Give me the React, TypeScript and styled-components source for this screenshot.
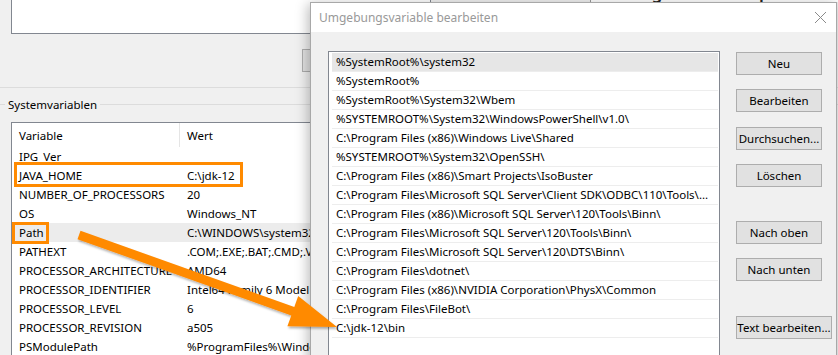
import React from 'react';
import styled, { createGlobalStyle } from 'styled-components';

const GlobalStyle = createGlobalStyle`
  html, body {
    margin: 0;
    padding: 0;
    background: #f0f0f0;
  }
  * {
    box-sizing: border-box;
  }
`;

const FONT = `'Segoe UI', 'Noto Sans', sans-serif`;
const ORANGE = '#ff8a00';

const Desktop = styled.div`
  position: relative;
  width: 838px;
  height: 355px;
  overflow: hidden;
  background: #f0f0f0;
  font-family: ${FONT};
  font-size: 11.5px;
  color: #000;
`;

/* window behind the dialog */
const EnvWindow = styled.div`
  display: flex;
  flex-direction: column;
  width: 838px;
`;

const UserGroup = styled.div`
  display: flex;
  flex-direction: column;
  padding-bottom: 15px;
  border-bottom: 1px solid #dcdcdc;
`;

const UserList = styled.div`
  margin-left: 11px;
  width: 420px;
  height: 34px;
  background: #fff;
  border: 1px solid #828790;
  border-top: none;
`;

const ButtonRow = styled.div`
  display: flex;
  gap: 8px;
  margin-top: 15px;
  padding-left: 302px;
`;

const WinButton = styled.div<{ $width?: number; $gap?: number }>`
  display: flex;
  align-items: center;
  justify-content: center;
  width: ${p => p.$width ?? 86}px;
  height: 23px;
  margin-top: ${p => p.$gap ?? 0}px;
  background: #e1e1e1;
  border: 1px solid #adadad;
  white-space: nowrap;
  flex-shrink: 0;
`;

const Legend = styled.div`
  display: flex;
  align-items: center;
  gap: 3px;
  height: 16px;
  margin-top: 8px;
  &::before {
    content: '';
    width: 5px;
    border-top: 1px solid #dcdcdc;
  }
  &::after {
    content: '';
    flex: 1;
    border-top: 1px solid #dcdcdc;
  }
`;

const SysList = styled.div`
  display: flex;
  flex-direction: column;
  margin: 10px 0 0 11px;
  width: 440px;
  background: #fff;
  border: 1px solid #828790;
`;

const HeaderRow = styled.div`
  display: flex;
  height: 24px;
  align-items: stretch;
`;

const HeaderCell = styled.div<{ $width?: number; $divider?: boolean }>`
  display: flex;
  align-items: center;
  padding-left: 7px;
  width: ${p => (p.$width ? `${p.$width}px` : 'auto')};
  flex: ${p => (p.$width ? 'none' : '1')};
  border-right: ${p => (p.$divider ? '1px solid #e5e5e5' : 'none')};
`;

const VarRow = styled.div<{ $hover?: boolean }>`
  display: flex;
  height: 19px;
  align-items: center;
  background: ${p => (p.$hover ? '#ececec' : 'transparent')};
`;

const VarCell = styled.div<{ $width?: number }>`
  padding-left: 7px;
  width: ${p => (p.$width ? `${p.$width}px` : 'auto')};
  flex: ${p => (p.$width ? 'none' : '1')};
  white-space: nowrap;
  overflow: hidden;
`;

/* the dialog on top */
const Dialog = styled.div`
  position: absolute;
  left: 310px;
  top: 2px;
  width: 527px;
  height: 400px;
  display: flex;
  flex-direction: column;
  background: #f0f0f0;
  border: 1px solid #a8a8a8;
  box-shadow: -2px 2px 12px rgba(0, 0, 0, 0.28);
`;

const TitleBar = styled.div`
  display: flex;
  align-items: center;
  justify-content: space-between;
  height: 29px;
  padding: 0 9px 0 8px;
  background: #fff;
  color: #999;
  font-size: 12px;
`;

const DialogBody = styled.div`
  display: flex;
  gap: 16px;
  padding: 19px 0 0 17px;
`;

const PathList = styled.div`
  display: flex;
  flex-direction: column;
  width: 392px;
  height: 320px;
  padding: 1px 1px 0 3px;
  background: #fff;
  border: 1px solid #828790;
`;

const PathRow = styled.div<{ $selected?: boolean }>`
  display: block;
  height: 19px;
  line-height: 18px;
  padding: 0 3px 0 4px;
  border-bottom: 1px solid #ededed;
  background: ${p => (p.$selected ? '#e6e6e6' : 'transparent')};
  white-space: nowrap;
  overflow: hidden;
  text-overflow: ellipsis;
`;

const ButtonColumn = styled.div`
  display: flex;
  flex-direction: column;
  padding-top: 1px;
`;

const BackStrip = styled.div`
  position: absolute;
  left: 590px;
  top: -18px;
  width: 260px;
  height: 20px;
  background: #fff;
  border-left: 1px solid #9a9a9a;
  padding-left: 12px;
  font-size: 17px;
  font-weight: 600;
  line-height: 22px;
  color: #222;
  white-space: nowrap;
  overflow: hidden;
`;

const Highlight = styled.div<{ $x: number; $y: number; $w: number; $h: number }>`
  position: absolute;
  left: ${p => p.$x}px;
  top: ${p => p.$y}px;
  width: ${p => p.$w}px;
  height: ${p => p.$h}px;
  border: 3px solid ${ORANGE};
  pointer-events: none;
`;

const ArrowSvg = styled.svg`
  position: absolute;
  left: 0;
  top: 0;
  pointer-events: none;
`;

const variables: [string, string][] = [
  ['IPG_Ver', ''],
  ['JAVA_HOME', 'C:\\jdk-12'],
  ['NUMBER_OF_PROCESSORS', '20'],
  ['OS', 'Windows_NT'],
  ['Path', 'C:\\WINDOWS\\system32;C:\\WINDOWS;C:\\WINDOWS\\System32\\Wbem'],
  ['PATHEXT', '.COM;.EXE;.BAT;.CMD;.VBS;.VBE;.JS'],
  ['PROCESSOR_ARCHITECTURE', 'AMD64'],
  ['PROCESSOR_IDENTIFIER', 'Intel64 Family 6 Model 183'],
  ['PROCESSOR_LEVEL', '6'],
  ['PROCESSOR_REVISION', 'a505'],
  ['PSModulePath', '%ProgramFiles%\\WindowsPowerShell\\Modules'],
];

const paths = [
  '%SystemRoot%\\system32',
  '%SystemRoot%',
  '%SystemRoot%\\System32\\Wbem',
  '%SYSTEMROOT%\\System32\\WindowsPowerShell\\v1.0\\',
  'C:\\Program Files (x86)\\Windows Live\\Shared',
  '%SYSTEMROOT%\\System32\\OpenSSH\\',
  'C:\\Program Files (x86)\\Smart Projects\\IsoBuster',
  'C:\\Program Files\\Microsoft SQL Server\\Client SDK\\ODBC\\110\\Tools\\Binn\\',
  'C:\\Program Files (x86)\\Microsoft SQL Server\\120\\Tools\\Binn\\',
  'C:\\Program Files\\Microsoft SQL Server\\120\\Tools\\Binn\\',
  'C:\\Program Files\\Microsoft SQL Server\\120\\DTS\\Binn\\',
  'C:\\Program Files\\dotnet\\',
  'C:\\Program Files (x86)\\NVIDIA Corporation\\PhysX\\Common',
  'C:\\Program Files\\FileBot\\',
  'C:\\jdk-12\\bin',
];

const dialogButtons: { label: string; gap: number; width?: number }[] = [
  { label: 'Neu', gap: 0 },
  { label: 'Bearbeiten', gap: 14 },
  { label: 'Durchsuchen...', gap: 15 },
  { label: 'Löschen', gap: 14 },
  { label: 'Nach oben', gap: 34 },
  { label: 'Nach unten', gap: 14 },
  { label: 'Text bearbeiten...', gap: 35, width: 96 },
];

const CloseIcon = () => (
  <svg width="13" height="13" viewBox="0 0 13 13">
    <path d="M1 1 L12 12 M12 1 L1 12" stroke="#8a8a8a" strokeWidth="1" fill="none" />
  </svg>
);

const App: React.FC = () => {
  return (
    <>
      <GlobalStyle />
      <Desktop>
        <EnvWindow>
          <UserGroup>
            <UserList />
            <ButtonRow>
              <WinButton $width={75}>Neu...</WinButton>
            </ButtonRow>
          </UserGroup>
          <Legend>Systemvariablen</Legend>
          <SysList>
            <HeaderRow>
              <HeaderCell $width={168} $divider>Variable</HeaderCell>
              <HeaderCell>Wert</HeaderCell>
            </HeaderRow>
            {variables.map(([name, value]) => (
              <VarRow key={name} $hover={name === 'Path'}>
                <VarCell $width={168}>{name}</VarCell>
                <VarCell>{value}</VarCell>
              </VarRow>
            ))}
          </SysList>
        </EnvWindow>

        <BackStrip>Settings on Desktop in Windows 10</BackStrip>

        <Dialog>
          <TitleBar>
            <span>Umgebungsvariable bearbeiten</span>
            <CloseIcon />
          </TitleBar>
          <DialogBody>
            <PathList>
              {paths.map((p, i) => (
                <PathRow key={p} $selected={i === 0}>
                  {p}
                </PathRow>
              ))}
            </PathList>
            <ButtonColumn>
              {dialogButtons.map(b => (
                <WinButton key={b.label} $gap={b.gap} $width={b.width}>
                  {b.label}
                </WinButton>
              ))}
            </ButtonColumn>
          </DialogBody>
        </Dialog>

        <Highlight $x={14} $y={162} $w={229} $h={25} />
        <Highlight $x={12} $y={222} $w={37} $h={22} />

        <ArrowSvg width="838" height="355" viewBox="0 0 838 355">
          <defs>
            <filter id="arrowShadow" x="-10%" y="-10%" width="120%" height="130%">
              <feDropShadow dx="1" dy="2" stdDeviation="1.2" floodColor="#000" floodOpacity="0.3" />
            </filter>
          </defs>
          <polygon
            points="80.5,230.8 294.3,307 298.2,296.1 337,327 287.4,326.3 291.3,315.4 77.5,239.2"
            fill={ORANGE}
            filter="url(#arrowShadow)"
          />
        </ArrowSvg>
      </Desktop>
    </>
  );
};

export default App;
